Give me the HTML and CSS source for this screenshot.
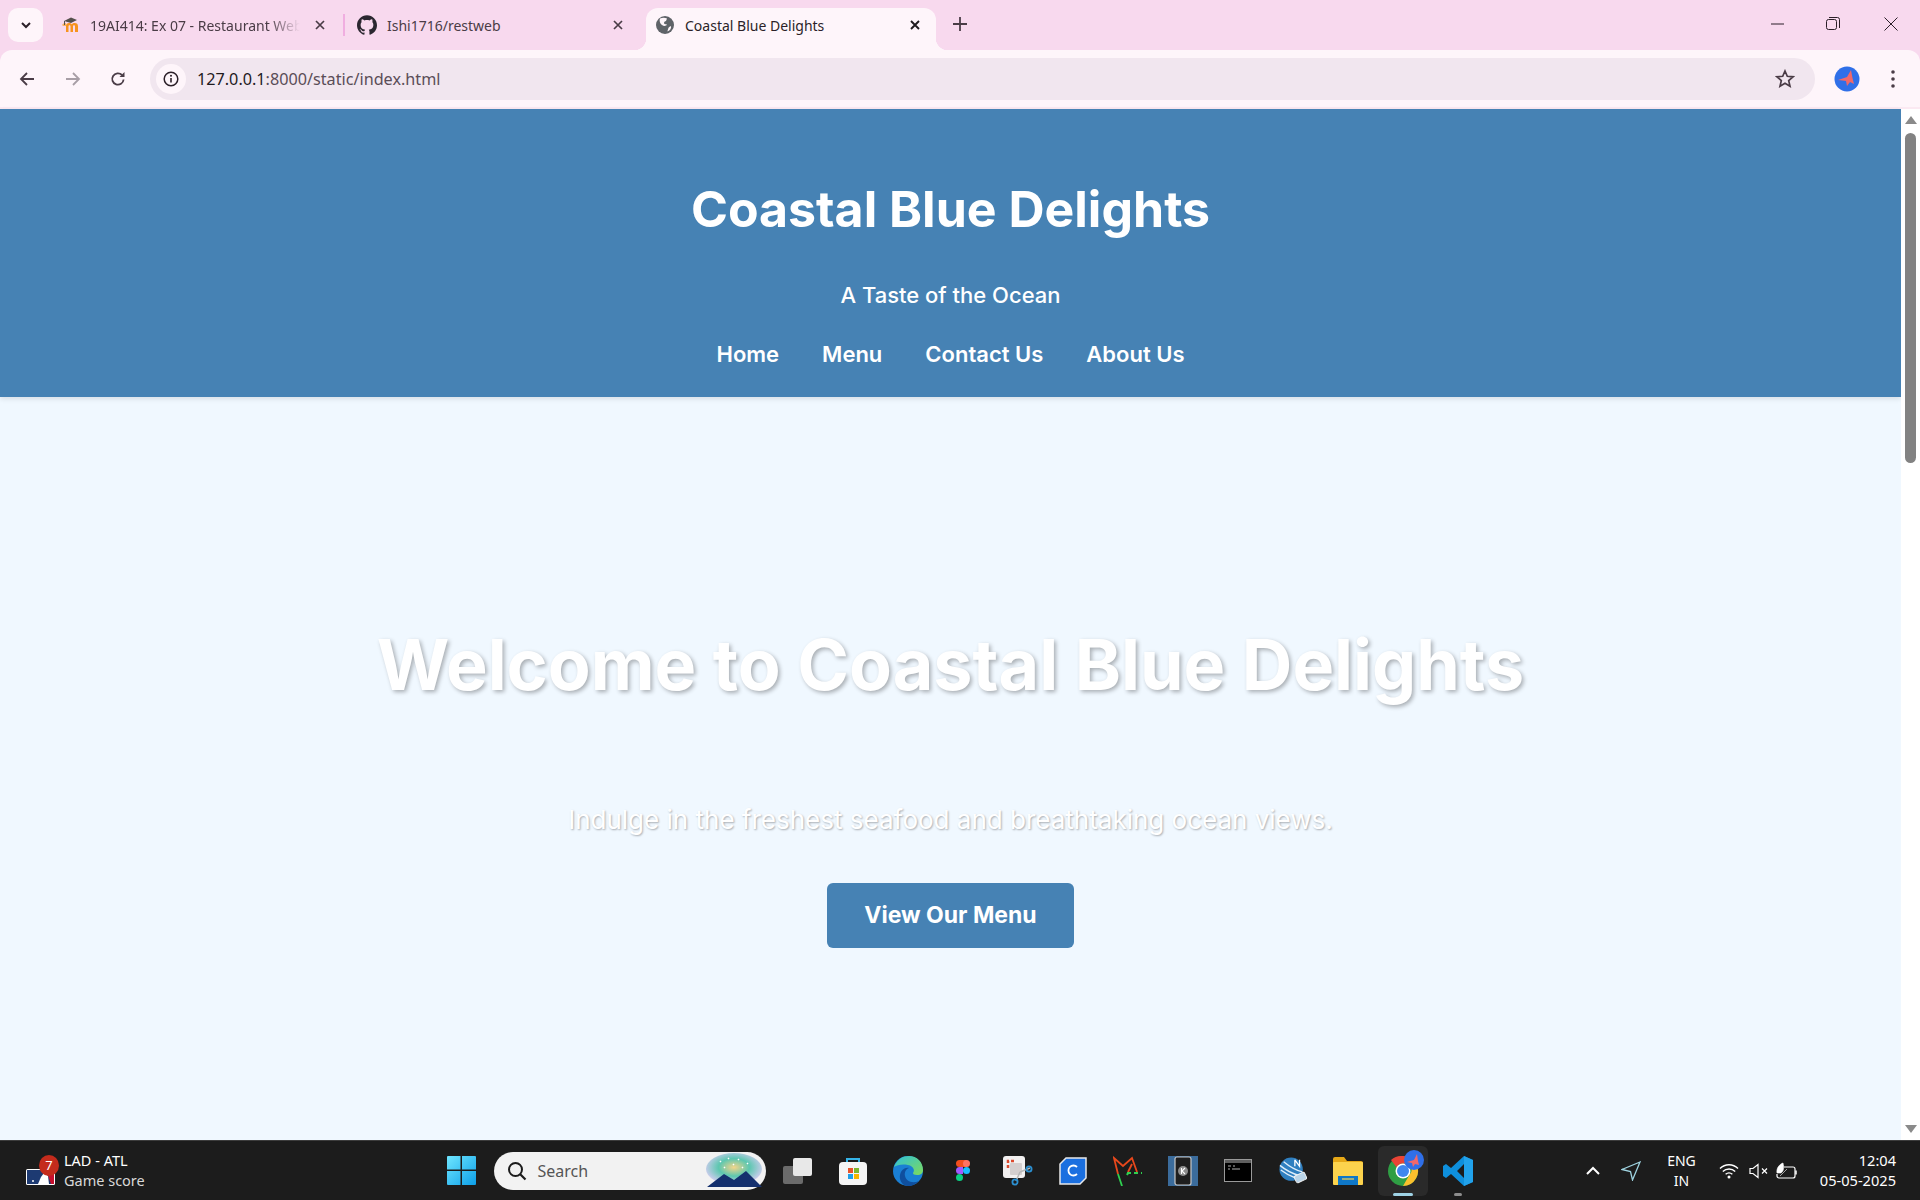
FILE: index.html
```html
<!DOCTYPE html>
<html lang="en">
<head>
  <meta charset="UTF-8"/>
  <title>Coastal Blue Delights</title>
  <link rel="stylesheet" href="styles.css">
</head>
<body>

  <div class="tabstrip">
    <div class="tab-search">
      <svg width="14" height="14" viewBox="0 0 14 14"><path d="M3 5l4 4 4-4" fill="none" stroke="#2b1f28" stroke-width="2"/></svg>
    </div>
    <div class="tab tab-first">
      <svg class="favicon" width="20" height="20" viewBox="0 0 20 20">
        <path d="M5 17v-6c0-1.900 1.100-3 3-3 1.200 0 2.100.5 2.800 1.300.7-.8 1.700-1.300 2.900-1.300 2.100 0 3.300 1.200 3.300 3.200V17h-3v-5.500c0-.8-.4-1.200-1-1.200s-1 .4-1 1.200V17h-2.500v-5.500c0-.8-.4-1.200-1-1.200s-1 .4-1 1.200V17z" fill="#f7931e"/>
        <path d="M1 10c.5-1.200 2-2 4-2v3H2z" fill="#f9b266"/>
        <path d="M3 6l7-3.500L16 5l-6 3z" fill="#55504c"/>
        <path d="M3.500 6v4" stroke="#55504c"/>
      </svg>
      <span class="tab-title fade">19AI414: Ex 07 - Restaurant Web</span>
      <svg class="tab-close" width="12" height="12" viewBox="0 0 12 12"><path d="M2 2l8 8M10 2l-8 8" stroke="#4a3c46" stroke-width="1.700"/></svg>
    </div>
    <div class="tab-sep"></div>
    <div class="tab tab-second">
      <svg class="favicon" width="20" height="20" viewBox="0 0 24 24"><path fill="#2b2730" d="M12 .297c-6.630 0-12 5.373-12 12 0 5.303 3.438 9.800 8.205 11.385.6.113.82-.258.82-.577 0-.285-.01-1.040-.015-2.040-3.338.724-4.042-1.610-4.042-1.610C4.422 18.070 3.633 17.700 3.633 17.700c-1.087-.744.084-.729.084-.729 1.205.084 1.838 1.236 1.838 1.236 1.070 1.835 2.809 1.305 3.495.998.108-.776.417-1.305.76-1.605-2.665-.3-5.466-1.332-5.466-5.930 0-1.310.465-2.380 1.235-3.220-.135-.303-.54-1.523.105-3.176 0 0 1.005-.322 3.300 1.230.96-.267 1.980-.399 3-.405 1.020.006 2.040.138 3 .405 2.280-1.552 3.285-1.230 3.285-1.230.645 1.653.24 2.873.12 3.176.765.84 1.230 1.910 1.230 3.220 0 4.610-2.805 5.625-5.475 5.920.42.36.81 1.096.81 2.220 0 1.606-.015 2.896-.015 3.286 0 .315.21.69.825.57C20.565 22.092 24 17.592 24 12.297c0-6.627-5.373-12-12-12"/></svg>
      <span class="tab-title">Ishi1716/restweb</span>
      <svg class="tab-close" width="12" height="12" viewBox="0 0 12 12"><path d="M2 2l8 8M10 2l-8 8" stroke="#4a3c46" stroke-width="1.700"/></svg>
    </div>
    <div class="tab tab-active">
      <svg class="favicon" width="20" height="20" viewBox="0 0 20 20">
        <circle cx="10" cy="10" r="9" fill="#5f6368"/>
        <path d="M5 3.500c2.500-1 5-1 7 0l-1 2.500c-2 .2-2.500 2-1.500 3l2.500.5c-1 2-3.500 1.500-5 .5S4 6.500 5 3.500zM16 11c.6 2-.8 4.600-3.500 5.600 0-1.600 1-2.600.8-3.600.8-1 1.700-1.500 2.700-2z" fill="#fef5fa"/>
      </svg>
      <span class="tab-title">Coastal Blue Delights</span>
      <svg class="tab-close" width="12" height="12" viewBox="0 0 12 12"><path d="M2 2l8 8M10 2l-8 8" stroke="#1f1a1e" stroke-width="1.900"/></svg>
    </div>
    <svg class="new-tab" width="14" height="14" viewBox="0 0 14 14"><path d="M7 0v14M0 7h14" stroke="#4a3c46" stroke-width="1.800"/></svg>
    <div class="window-controls">
      <svg width="14" height="14" viewBox="0 0 14 14"><path d="M0 7h13" stroke="#2b1f28" stroke-width="1"/></svg>
      <svg width="14" height="14" viewBox="0 0 14 14"><rect x=".5" y="2.500" width="10" height="10" rx="2" fill="none" stroke="#2b1f28"/><path d="M3 .5h8.500a2 2 0 0 1 2 2V11" fill="none" stroke="#2b1f28"/></svg>
      <svg class="win-close" width="14" height="14" viewBox="0 0 14 14"><path d="M.5.5l13 13M13.500.5l-13 13" stroke="#2b1f28" stroke-width="1"/></svg>
    </div>
  </div>

  <div class="toolbar">
    <svg class="nav-icon" width="16" height="16" viewBox="0 0 16 16"><path d="M15 8H2M8 2L2 8l6 6" fill="none" stroke="#4a3c46" stroke-width="1.800"/></svg>
    <svg class="nav-icon" width="16" height="16" viewBox="0 0 16 16"><path d="M1 8h13M8 2l6 6-6 6" fill="none" stroke="#a89ea6" stroke-width="1.800"/></svg>
    <svg class="nav-icon" width="16" height="16" viewBox="0 0 16 16"><path d="M13.600 8.500A5.700 5.700 0 1 1 12 4" fill="none" stroke="#4a3c46" stroke-width="1.800"/><path d="M14.500 1v5h-5z" fill="#4a3c46"/></svg>
    <div class="omnibox">
      <div class="site-info">
        <svg width="16" height="16" viewBox="0 0 16 16"><circle cx="8" cy="8" r="6.800" fill="none" stroke="#2b1f28" stroke-width="1.500"/><path d="M8 7v4.500" stroke="#2b1f28" stroke-width="1.600"/><circle cx="8" cy="4.800" r="1" fill="#2b1f28"/></svg>
      </div>
      <span class="url"><span class="url-host">127.0.0.1</span>:8000/static/index.html</span>
      <svg class="star" width="20" height="20" viewBox="0 0 20 20"><path d="M10 2l2.300 5.300 5.700.5-4.300 3.800 1.300 5.600-5-3-5 3 1.300-5.600L2 7.800l5.700-.5z" fill="none" stroke="#4a3c46" stroke-width="1.700"/></svg>
    </div>
    <svg class="avatar" width="26" height="26" viewBox="0 0 26 26">
      <circle cx="13" cy="13" r="12.500" fill="#2f6fe8"/>
      <path d="M4 14l9-3 4-7 1.500 8 1.500 6-4-2-3 4-1-5z" fill="#f0686a"/>
    </svg>
    <svg class="menu-dots" width="6" height="18" viewBox="0 0 6 18"><circle cx="3" cy="2" r="1.800" fill="#4a3c46"/><circle cx="3" cy="9" r="1.800" fill="#4a3c46"/><circle cx="3" cy="16" r="1.800" fill="#4a3c46"/></svg>
  </div>

  <div class="viewport">
    <div class="page">
      <header class="site-header">
        <h1>Coastal Blue Delights</h1>
        <p class="tagline">A Taste of the Ocean</p>
        <nav class="site-nav">
          <a>Home</a>
          <a>Menu</a>
          <a>Contact Us</a>
          <a>About Us</a>
        </nav>
      </header>
      <section class="hero">
        <h2>Welcome to Coastal Blue Delights</h2>
        <p>Indulge in the freshest seafood and breathtaking ocean views.</p>
        <a class="hero-btn">View Our Menu</a>
      </section>
    </div>
    <div class="scrollbar">
      <div class="arrow-up"></div>
      <div class="thumb"></div>
      <div class="arrow-down"></div>
    </div>
  </div>

  <div class="taskbar">
    <div class="widget">
      <div class="widget-icon">
        <svg width="29" height="16" viewBox="0 0 29 16">
          <rect width="29" height="16" rx="1.500" fill="#fff"/>
          <rect x="1" y="1" width="27" height="14" fill="#1d3a72"/>
          <path d="M20 1h8v14h-3z" fill="#c8102e"/>
          <path d="M12 15l3-7 3-4 4 3 1 8z" fill="#fff"/>
          <circle cx="7" cy="12" r="1" fill="#fff"/>
        </svg>
        <span class="badge">7</span>
      </div>
      <div class="widget-text">
        <span>LAD - ATL</span>
        <span class="widget-sub">Game score</span>
      </div>
    </div>

    <div class="task-center">
      <div class="task-item task-start">
        <svg width="29" height="29" viewBox="0 0 29 29">
          <defs><linearGradient id="winblue" x1="0" y1="0" x2="1" y2="1"><stop offset="0" stop-color="#6fe6ff"/><stop offset="1" stop-color="#0d9fe8"/></linearGradient></defs>
          <path fill="url(#winblue)" d="M0 1a1 1 0 0 1 1-1h12.500v13.500H0zM15 0h13a1 1 0 0 1 1 1v12.500H15zM0 15h13.500v14H1a1 1 0 0 1-1-1zM15 15h14v13a1 1 0 0 1-1 1H15z"/>
        </svg>
      </div>
      <div class="search-box">
        <svg width="20" height="20" viewBox="0 0 20 20"><circle cx="8.500" cy="8.500" r="6.500" fill="none" stroke="#1c1c1c" stroke-width="2"/><path d="M13 13l5.500 5.500" stroke="#1c1c1c" stroke-width="2.200"/></svg>
        <span>Search</span>
        <svg class="search-art" width="60" height="36" viewBox="0 0 60 36">
          <defs><radialGradient id="burst" cx=".5" cy=".45" r=".55"><stop offset="0" stop-color="#f4d58a"/><stop offset=".5" stop-color="#5cc7b0"/><stop offset="1" stop-color="#d5cdf2"/></radialGradient></defs>
          <ellipse cx="30" cy="16" rx="28" ry="16" fill="url(#burst)"/>
          <path d="M3 34l17-13 10 6 12-9 16 16z" fill="#14306e"/>
          <path d="M16 8l1 1M24 5l1 1M34 6l1 1M43 10l1 1M20 14l1 1M38 14l1 1M29 11l1 1" stroke="#fff" stroke-width="1.500"/>
        </svg>
      </div>
      <div class="task-item">
        <svg width="30" height="28" viewBox="0 0 30 28"><rect x="0" y="9" width="20" height="18" rx="2" fill="#6b6b6b"/><rect x="10" y="1" width="19" height="18" rx="2" fill="#e8e8e8"/></svg>
      </div>
      <div class="task-item">
        <svg width="30" height="30" viewBox="0 0 30 30">
          <path d="M9 7V3h12v4" fill="none" stroke="#35b4e8" stroke-width="2"/>
          <rect x="1" y="6" width="28" height="23" rx="4" fill="#f5f5f5"/>
          <rect x="10" y="12" width="5" height="5" fill="#e8532a"/><rect x="16" y="12" width="5" height="5" fill="#7cb82f"/>
          <rect x="10" y="18" width="5" height="5" fill="#1f9fe8"/><rect x="16" y="18" width="5" height="5" fill="#f7b500"/>
        </svg>
      </div>
      <div class="task-item">
        <svg width="30" height="30" viewBox="0 0 30 30">
          <defs><linearGradient id="edgegreen" x1="0" y1="0" x2="1" y2="1"><stop offset="0" stop-color="#2fc0d8"/><stop offset="1" stop-color="#7edb5a"/></linearGradient></defs>
          <circle cx="15" cy="15" r="15" fill="#1a7fd4"/>
          <path d="M1 11C4 3 10 0 16 0c8 0 14 6 14 14 0 3-2 5-6 5-3 0-4-1-4-2 2-2 1-7-5-8C9 8 4 9 1 11z" fill="url(#edgegreen)"/>
          <path d="M14 30c-5-1-8-6-7-11s5-8 9-7c-3 1-5 4-4 8 1 5 7 8 14 5-3 3-8 6-12 5z" fill="#0f4f9e"/>
        </svg>
      </div>
      <div class="task-item">
        <svg width="14" height="21" viewBox="0 0 14 21">
          <circle cx="3.500" cy="3.500" r="3.500" fill="#f24e1e"/><rect x="3.500" y="0" width="7" height="7" fill="#f24e1e"/><circle cx="10.500" cy="3.500" r="3.500" fill="#ff7262"/>
          <circle cx="3.500" cy="10.500" r="3.500" fill="#a259ff"/><rect x="3.500" y="7" width="3.500" height="7" fill="#a259ff"/><circle cx="10.500" cy="10.500" r="3.500" fill="#1abcfe"/>
          <circle cx="3.500" cy="17.500" r="3.500" fill="#0acf83"/>
        </svg>
      </div>
      <div class="task-item">
        <svg width="30" height="30" viewBox="0 0 30 30">
          <rect x="0" y="0" width="22" height="22" rx="3" fill="#f2f0f0"/>
          <rect x="7" y="7" width="12" height="12" rx="1" fill="#d4cfcf"/>
          <path d="M5 12V5h8" fill="none" stroke="#dc4a2e" stroke-width="2.500" stroke-dasharray="3 2"/>
          <path d="M17 16l-4 9M17 16l10-4" stroke="#b8b8b8" stroke-width="1.500"/>
          <circle cx="12" cy="26" r="2.600" fill="none" stroke="#2b8fd0" stroke-width="1.800"/>
          <circle cx="26" cy="13" r="2.600" fill="none" stroke="#2b8fd0" stroke-width="1.800"/>
        </svg>
      </div>
      <div class="task-item">
        <svg width="28" height="28" viewBox="0 0 28 28">
          <path d="M7 1h20v20l-6 6H1V7z" fill="#1a6fe0" stroke="#e8e8e8" stroke-width="1.500"/>
          <path d="M18 10a5 5 0 1 0 0 7" fill="none" stroke="#fff" stroke-width="1.800"/>
        </svg>
      </div>
      <div class="task-item">
        <svg width="30" height="30" viewBox="0 0 30 30">
          <path d="M5 18L1 2l9 8 9-8 5 14" fill="none" stroke="#e8481c" stroke-width="1.800"/>
          <path d="M15 16l4-8" stroke="#e8481c" stroke-width="1.800"/>
          <path d="M5 18l4 12" stroke="#2fd050" stroke-width="1.800"/>
          <path d="M14 17h15M15 17l-1 2" stroke="#2fd050" stroke-width="2" stroke-dasharray="4 3"/>
        </svg>
      </div>
      <div class="task-item">
        <svg width="30" height="30" viewBox="0 0 30 30">
          <rect width="30" height="30" fill="#3b6c9c"/>
          <rect x="7" y="1" width="16" height="28" rx="2" fill="#1e1e1e" stroke="#c8c8c8" stroke-width="1.200"/>
          <circle cx="15" cy="15" r="5" fill="#8d8d8d"/>
          <path d="M13.500 12v6M17 12l-3 3 3 3" fill="none" stroke="#fff" stroke-width="1.100"/>
        </svg>
      </div>
      <div class="task-item">
        <svg width="28" height="23" viewBox="0 0 28 23">
          <rect x=".5" y=".5" width="27" height="22" fill="#000" stroke="#9a9a9a"/>
          <rect x="1" y="1" width="26" height="3" fill="#5f5f5f"/>
          <path d="M4 7h3M9 7h2M4 10h2M8 10h8" stroke="#b0b0b0"/>
        </svg>
      </div>
      <div class="task-item">
        <svg width="28" height="28" viewBox="0 0 30 30">
          <circle cx="13" cy="13" r="12.500" fill="#2f7fc0"/>
          <path d="M1 9c6 5 14 9 21 11M2 14c5 4 11 7 17 9M5 5c6 5 13 9 20 11" fill="none" stroke="#dfeefa" stroke-width="1.500"/>
          <rect x="17" y="18" width="12" height="8" rx="2" transform="rotate(-25 23 22)" fill="#b9d4e8" stroke="#f2f2f2"/>
          <path d="M17 3v7M17 3l5 7V3" fill="none" stroke="#fff" stroke-width="1.400"/>
        </svg>
      </div>
      <div class="task-item">
        <svg width="30" height="28" viewBox="0 0 30 28">
          <path d="M0 2a2 2 0 0 1 2-2h9l3 4h14a2 2 0 0 1 2 2v4H0z" fill="#e6a817"/>
          <rect x="0" y="5" width="30" height="23" rx="1" fill="#fcd34d"/>
          <rect x="5" y="19" width="20" height="9" fill="#0f78c8"/>
          <rect x="9" y="21" width="12" height="2" fill="#fcd34d" opacity=".6"/>
        </svg>
      </div>
      <div class="task-item task-open">
        <svg width="48" height="48" viewBox="-9 -4 48 48">
          <circle cx="15" cy="20" r="15" fill="#2f9e44"/>
          <path d="M15 5a15 15 0 0 1 13 7.500H15a7.500 7.500 0 0 0-6.500 3.800L3 9A15 15 0 0 1 15 5z" fill="#ea4335"/>
          <path d="M28 12.500A15 15 0 0 1 15 35l6.500-11.300A7.500 7.500 0 0 0 21 12.500z" fill="#fbc02d"/>
          <circle cx="15" cy="20" r="7.500" fill="#fff"/>
          <circle cx="15" cy="20" r="6" fill="#3f86ee"/>
          <circle cx="26" cy="9" r="10" fill="#2f6fe8"/>
          <path d="M19 11l7-2 3-6 1 7 1 4-4-1-2 3-1-4z" fill="#f0686a"/>
        </svg>
        <span class="task-bar task-bar-active"></span>
      </div>
      <div class="task-item task-running">
        <svg width="30" height="30" viewBox="0 0 30 30">
          <path d="M21 0l9 4v22l-9 4L8 18l-5 4-3-2V10l3-2 5 4zM21 8l-7 7 7 7z" fill="#0e8fdc" fill-rule="evenodd"/>
          <path d="M21 0l9 4v22l-9 4z" fill="#27a6ef" opacity=".8"/>
        </svg>
        <span class="task-bar"></span>
      </div>
    </div>

    <div class="tray">
      <svg class="tray-chevron" width="16" height="10" viewBox="0 0 16 10"><path d="M2 8l6-6 6 6" fill="none" stroke="#fff" stroke-width="2"/></svg>
      <svg class="tray-nav" width="20" height="20" viewBox="0 0 20 20"><path d="M19 1L1 8.500l8.500 2 2 8.500z" fill="none" stroke="#9fd3e0" stroke-width="1.300"/></svg>
      <div class="tray-lang"><span>ENG</span><span>IN</span></div>
      <svg class="tray-wifi" width="20" height="16" viewBox="0 0 20 16"><path d="M1 5.500c5-5 13-5 18 0M3.800 8.500c3.500-3.300 9-3.300 12.400 0M6.600 11.300c2-1.700 4.800-1.700 6.800 0" fill="none" stroke="#fff" stroke-width="1.400"/><circle cx="10" cy="14" r="1.500" fill="#fff"/></svg>
      <svg class="tray-sound" width="20" height="16" viewBox="0 0 20 16"><path d="M1 5.500h3L9 1.500v13l-5-4H1z" fill="none" stroke="#fff" stroke-width="1.200"/><path d="M13 5.500l5 5M18 5.500l-5 5" stroke="#fff" stroke-width="1.200"/></svg>
      <svg class="tray-battery" width="21" height="18" viewBox="0 0 21 18"><path d="M8 5h9a2 2 0 0 1 2 2v7a2 2 0 0 1-2 2H3a2 2 0 0 1-2-2v-2" fill="none" stroke="#fff" stroke-width="1.200"/><path d="M20 8.500v4" stroke="#fff" stroke-width="1.500"/><path d="M1 11C0 6 4 2 7 1c1 4 1 8-2 10zM4 14l7-7" fill="#fff" stroke="#fff" stroke-width=".6"/></svg>
      <div class="tray-clock"><span>12:04</span><span>05-05-2025</span></div>
    </div>
  </div>

</body>
</html>
```

FILE: styles.css
```css
* {
  box-sizing: border-box;
}
html, body {
  height: 100%;
}
body {
  margin: 0;
  display: flex;
  flex-direction: column;
  overflow: hidden;
  font-family: 'Noto Sans', sans-serif;
  background: #f8d9ee;
}

/* browser tabs */
.tabstrip {
  height: 50px;
  flex: none;
  background: #f8d9ee;
  display: flex;
  align-items: flex-start;
  padding: 8px 0 0 8px;
}
.tab-search {
  width: 35px;
  height: 34px;
  border-radius: 10px;
  background: #fef5fa;
  display: flex;
  align-items: center;
  justify-content: center;
}
.tab {
  height: 34px;
  display: flex;
  align-items: center;
  color: #4a3c46;
  font-size: 14px;
}
.tab-first {
  width: 300px;
  padding: 0 17px 0 18px;
}
.tab-first .tab-title {
  margin-left: 9px;
}
.tab-first .tab-close {
  margin-left: 14px;
}
.tab-second {
  width: 301px;
  padding: 0 22px 0 12px;
}
.tab-sep {
  width: 2px;
  height: 22px;
  margin-top: 6px;
  background: #f0aee0;
}
.favicon {
  flex: none;
}
.tab-title {
  flex: 1;
  margin-left: 10px;
  white-space: nowrap;
  overflow: hidden;
}
.fade {
  -webkit-mask-image: linear-gradient(to right, #000 85%, transparent 100%);
  mask-image: linear-gradient(to right, #000 85%, transparent 100%);
}
.tab-close {
  flex: none;
  margin-left: 10px;
}
.tab-active {
  position: relative;
  width: 290px;
  height: 42px;
  padding: 0 15px 8px 9px;
  background: #fef5fa;
  border-radius: 12px 12px 0 0;
  color: #2b1f28;
}
.tab-active::before,
.tab-active::after {
  content: "";
  position: absolute;
  bottom: 0;
  width: 12px;
  height: 12px;
}
.tab-active::before {
  left: -12px;
  background: radial-gradient(circle at 0 0, transparent 12px, #fef5fa 12.5px);
}
.tab-active::after {
  right: -12px;
  background: radial-gradient(circle at 100% 0, transparent 12px, #fef5fa 12.5px);
}
.new-tab {
  margin: 9px 0 0 17px;
}
.window-controls {
  margin-left: auto;
  display: flex;
  gap: 41px;
  padding: 9px 22px 0 0;
}
.win-close {
  margin-left: 3px;
}

/* address bar */
.toolbar {
  height: 59px;
  flex: none;
  display: flex;
  align-items: center;
  padding: 1px 0 0 19px;
  background: #fef5fa;
  border-bottom: 2px solid #fbe9f2;
  border-radius: 12px 12px 0 0;
}
.nav-icon {
  margin-right: 29.5px;
}
.omnibox {
  margin-left: -5.5px;
  width: 1665px;
  height: 42px;
  border-radius: 21px;
  background: #f1e6ef;
  display: flex;
  align-items: center;
  padding: 0 20px 0 6px;
}
.site-info {
  width: 30px;
  height: 30px;
  border-radius: 50%;
  background: #fef5fa;
  display: flex;
  align-items: center;
  justify-content: center;
}
.url {
  margin-left: 11px;
  font-size: 16.2px;
  color: #5a4d57;
}
.url-host {
  color: #1f1a1e;
}
.star {
  margin-left: auto;
}
.avatar {
  margin-left: 19px;
}
.menu-dots {
  margin-left: 30px;
}

/* page */
.viewport {
  flex: 1;
  min-height: 0;
  display: flex;
}
.page {
  flex: 1;
  background: #f0f8ff;
  text-align: center;
  font-family: 'Inter', sans-serif;
}
.site-header {
  height: 288px;
  padding-top: 71px;
  background: #4682b4;
  color: #fff;
  box-shadow: 0 2px 5px rgba(0,0,0,0.1);
}
.site-header h1 {
  margin: 0;
  font-size: 50px;
  line-height: 58px;
  font-weight: 700;
}
.tagline {
  margin: 40px 0 0;
  font-size: 22px;
  line-height: 34px;
  font-weight: 500;
}
.site-nav {
  margin-top: 25px;
  display: flex;
  justify-content: center;
  gap: 43px;
  font-size: 22px;
  line-height: 34px;
  font-weight: 600;
}
.hero {
  padding-top: 220px;
}
.hero h2 {
  margin: 0;
  font-size: 70px;
  line-height: 96px;
  font-weight: 700;
  color: #fff;
  text-shadow: 2px 2px 4px rgba(0,0,0,0.3);
}
.hero p {
  margin: 88px 0 0;
  font-size: 26px;
  line-height: 38px;
  color: #fff;
  text-shadow: 1px 1px 2px rgba(0,0,0,0.3);
}
.hero-btn {
  display: inline-block;
  width: 247px;
  height: 65px;
  margin-top: 44px;
  background: #4682b4;
  border-radius: 6px;
  color: #fff;
  font-size: 23px;
  line-height: 65px;
  font-weight: 700;
}
.scrollbar {
  width: 19px;
  background: #fff;
  display: flex;
  flex-direction: column;
  align-items: center;
  padding: 7px 0;
}
.arrow-up {
  border: 6.500px solid transparent;
  border-top: 0;
  border-bottom: 8px solid #8a8a8a;
}
.arrow-down {
  margin-top: auto;
  border: 6.500px solid transparent;
  border-bottom: 0;
  border-top: 8px solid #8a8a8a;
}
.thumb {
  width: 11px;
  height: 330px;
  margin-top: 9px;
  border-radius: 6px;
  background: #828282;
}

/* windows taskbar */
.taskbar {
  height: 60px;
  flex: none;
  display: grid;
  grid-template-columns: 1fr auto 1fr;
  align-items: center;
  background: #1c1c1c;
  border-top: 1px solid #3c3c3c;
  color: #fff;
  font-size: 14.6px;
}
.widget {
  display: flex;
  align-items: center;
  padding-left: 26px;
}
.widget-icon {
  position: relative;
  width: 38px;
  margin-top: 12px;
}
.widget-icon svg {
  display: block;
}
.badge {
  position: absolute;
  left: 13px;
  top: -14px;
  width: 20px;
  height: 21px;
  border-radius: 50%;
  background: #c42b1c;
  font-size: 13px;
  line-height: 20px;
  text-align: center;
}
.widget-text {
  display: flex;
  flex-direction: column;
  margin-top: -2px;
  line-height: 20px;
  font-size: 14.5px;
}
.widget-sub {
  color: #d8d8d8;
}
.task-center {
  display: flex;
  align-items: center;
  margin-left: 10px;
}
.task-item {
  position: relative;
  width: 55px;
  height: 50px;
  flex: none;
  display: flex;
  align-items: center;
  justify-content: center;
}
.task-start {
  width: 33px;
}
.search-box {
  width: 272px;
  height: 38px;
  margin: 0 5px 0 16px;
  border-radius: 19px;
  background: #f2f2f2;
  color: #555;
  display: flex;
  align-items: center;
  padding-left: 13px;
  font-size: 16px;
}
.search-box span {
  margin-left: 11px;
}
.search-art {
  margin: 0 2px 0 auto;
}
.task-open {
  width: 50px;
  margin: 0 2.500px;
  background: #2a2a2a;
  border-radius: 6px;
}
.task-bar {
  position: absolute;
  bottom: 0;
  left: 50%;
  width: 8px;
  height: 3px;
  margin-left: -4px;
  border-radius: 2px;
  background: #8d8d8d;
}
.task-bar-active {
  width: 20px;
  margin-left: -10px;
  background: #9fd3e6;
}
.tray {
  display: flex;
  align-items: center;
  justify-content: flex-end;
  padding-right: 24px;
}
.tray-nav {
  margin-left: 20px;
}
.tray-lang {
  display: flex;
  flex-direction: column;
  align-items: center;
  margin-left: 26px;
  line-height: 20px;
  font-size: 14px;
}
.tray-wifi {
  margin-left: 23px;
}
.tray-sound {
  margin-left: 10px;
}
.tray-battery {
  margin-left: 7px;
}
.tray-clock {
  display: flex;
  flex-direction: column;
  align-items: flex-end;
  margin-left: 23px;
  line-height: 20px;
  margin-top: -2px;
}
```
